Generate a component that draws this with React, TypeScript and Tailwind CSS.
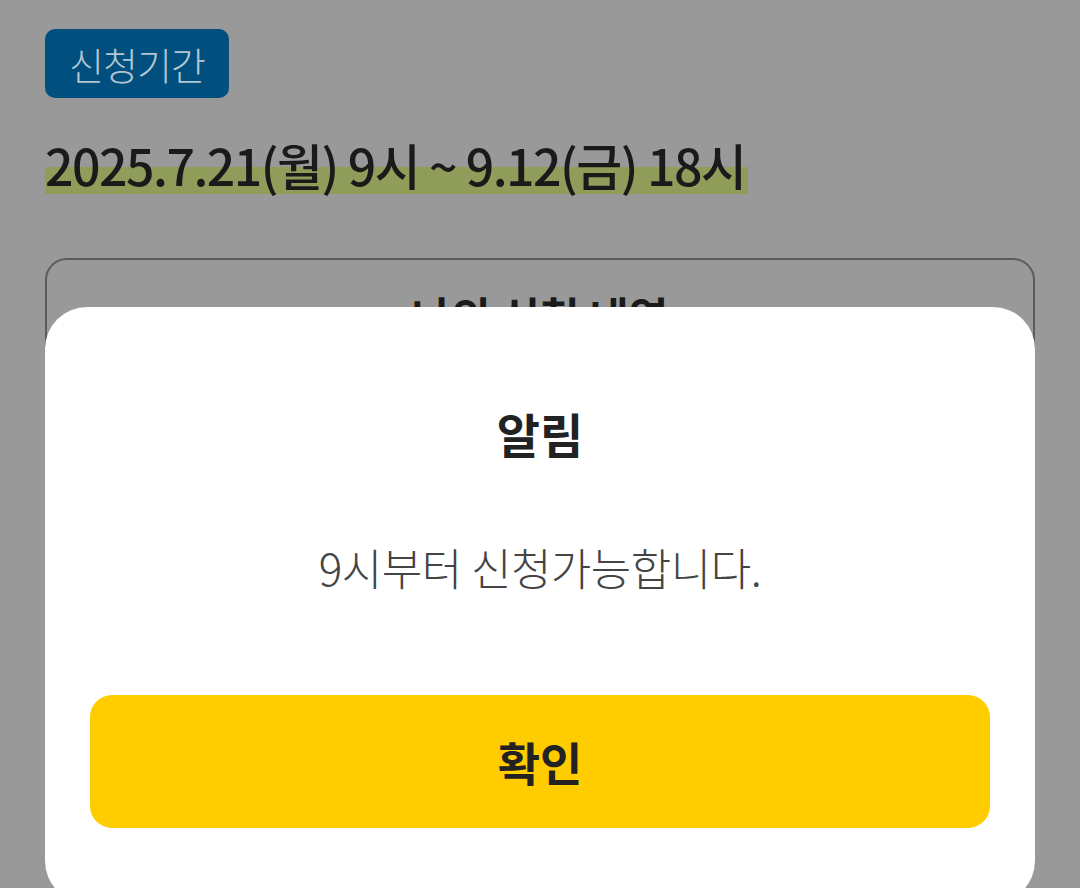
const kr = "font-['Noto_Sans_CJK_KR','Noto_Sans',sans-serif]";

export default function App() {
  return (
    <div className={`relative h-[888px] w-[1080px] overflow-hidden bg-[#999999] ${kr}`}>
      {/* page behind the dim */}
      <div className="px-[45px] pt-[29px]">
        <div className="flex h-[69px] w-[184px] items-center justify-center rounded-[10px] bg-[#004f7e]">
          <span className="text-[38px] font-light leading-none tracking-[-1px] text-[#b5c6d3]">신청기간</span>
        </div>

        <div className="mt-[36px]">
          <span className="inline-block bg-[linear-gradient(transparent_55%,#8f9c5a_55%)] pr-[3px] text-[50px] font-medium leading-[60px] tracking-[-1.5px] text-[#1a1a1a]">
            2025.7.21(월) 9시 ~ 9.12(금) 18시
          </span>
        </div>

        <div className="mt-[64px] h-[400px] rounded-[22px] border-2 border-[#5b5b60] pt-[34px] text-center">
          <span className="text-[43px] font-bold leading-none text-[#1a1a1a]">나의 신청 내역</span>
        </div>
      </div>

      {/* alert dialog */}
      <div className="absolute left-[45px] top-[307px] flex h-[596px] w-[990px] flex-col items-center rounded-[42px] bg-white px-[45px] pt-[98px]">
        <h2 className="text-[47px] font-bold leading-[56px] text-[#222222]">알림</h2>
        <p className="mt-[78px] text-[44px] font-light leading-[56px] tracking-[-0.5px] text-[#444444]">
          9시부터 신청가능합니다.
        </p>
        <button className="mt-[100px] flex h-[133px] w-[900px] items-center justify-center rounded-[22px] bg-[#ffcc00] text-[46px] font-bold text-[#222222]">
          확인
        </button>
      </div>
    </div>
  );
}
